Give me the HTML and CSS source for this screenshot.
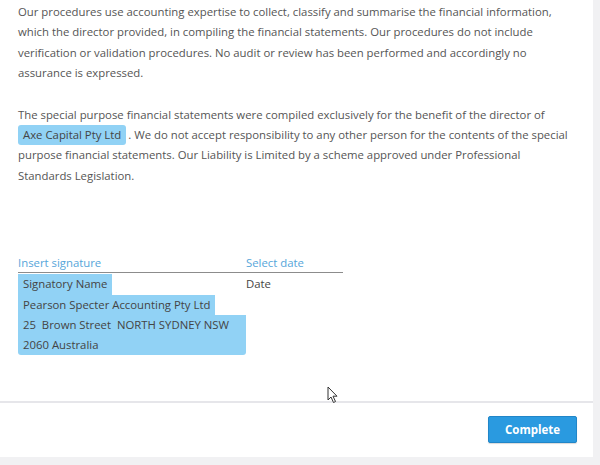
FILE: index.html
```html
<!DOCTYPE html>
<html>
<head>
<meta charset="utf-8">
<link rel="stylesheet" href="styles.css">
</head>
<body>
<div class="panel">
  <div class="content">
    <p class="para">Our procedures use accounting expertise to collect, classify and summarise the financial information, which the director provided, in compiling the financial statements. Our procedures do not include verification or validation procedures. No audit or review has been performed and accordingly no assurance is expressed.</p>
    <p class="para">The special purpose financial statements were compiled exclusively for the benefit of the director of <span class="hl">Axe Capital Pty Ltd</span>. We do not accept responsibility to any other person for the contents of the special purpose financial statements. Our Liability is Limited by a scheme approved under Professional Standards Legislation.</p>
    <div class="sig">
      <div class="sig-head">
        <div class="col1 link">Insert signature</div>
        <div class="col2 link">Select date</div>
      </div>
      <div class="sig-body">
        <div class="col1">
          <span class="chip">Signatory Name</span>
          <span class="chip">Pearson Specter Accounting Pty Ltd</span>
          <span class="chip">25&nbsp; Brown Street&nbsp; NORTH SYDNEY NSW 2060 Australia</span>
        </div>
        <div class="col2 date">Date</div>
      </div>
    </div>
  </div>
  <div class="footer">
    <button class="btn">Complete</button>
  </div>
  <svg class="cursor" width="12" height="18" viewBox="0 0 12 18"><path d="M1 1 L1 14 L4 11 L6.5 16.5 L8.5 15.5 L6 10.2 L10 10.2 Z" fill="#fff" stroke="#333" stroke-width="1" stroke-linejoin="round"/></svg>
</div>
</body>
</html>
```
FILE: styles.css
```css
html, body {
  margin: 0;
  padding: 0;
  background: #f1f1f3;
}
body {
  width: 600px;
  height: 465px;
  overflow: hidden;
  font-family: "Open Sans", "Liberation Sans", sans-serif;
  font-size: 11.35px;
  color: #555;
}
.panel {
  position: relative;
  width: 593px;
  height: 457px;
  background: #fff;
  display: flex;
  flex-direction: column;
}
.content {
  flex: 1;
  padding: 1px 18px 0 18px;
}
.para {
  margin: 0 0 21px 0;
  line-height: 20.4px;
  width: 552px;
}
.para:first-child {
  margin-top: 1px;
}
.hl {
  display: inline-block;
  line-height: 20px;
  background: #91d2f5;
  border-radius: 3px;
  padding: 0 5px;
  margin-right: 2px;
  color: #444;
}
.sig {
  margin-top: 67px;
  width: 325px;
}
.sig-head {
  display: flex;
  border-bottom: 1px solid #8c8c8c;
  line-height: 19px;
  height: 19px;
}
.link {
  color: #56a6da;
}
.col1 {
  width: 228px;
  flex: none;
}
.col2 {
  flex: 1;
}
.sig-body {
  display: flex;
  margin-top: 1px;
  line-height: 20.3px;
}
.sig-body .col1 {
  display: flex;
  flex-direction: column;
  align-items: flex-start;
}
.chip {
  background: #91d2f5;
  padding: 0 5px;
  box-sizing: border-box;
  max-width: 228px;
  color: #444;
}
.chip:last-child {
  width: 228px;
  border-radius: 0 0 3px 3px;
}
.date {
  color: #444;
}
.footer {
  height: 54px;
  border-top: 2px solid #e6e6ea;
  display: flex;
  justify-content: flex-end;
  align-items: center;
  padding-right: 16px;
}
.btn {
  width: 89px;
  height: 27px;
  background: #2a9ae0;
  border: 1px solid #2186c8;
  border-radius: 2px;
  color: #fff;
  font-family: "Open Sans", "Liberation Sans", sans-serif;
  font-weight: 700;
  font-size: 11.5px;
  box-shadow: 0 1px 1px rgba(0,0,0,0.15);
  margin-top: -1px;
}
.cursor {
  position: absolute;
  left: 327px;
  top: 386px;
}
```
